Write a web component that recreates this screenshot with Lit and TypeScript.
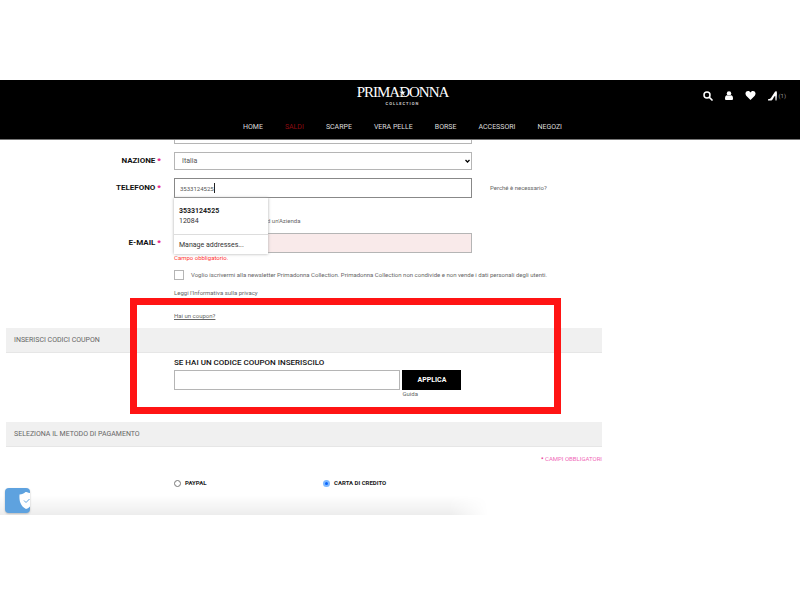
import { LitElement, html, css, svg } from "lit";
import { customElement } from "lit/decorators.js";

const NAV = ["HOME", "SALDI", "SCARPE", "VERA PELLE", "BORSE", "ACCESSORI", "NEGOZI"];

const searchIcon = svg`<svg viewBox="0 0 20 20" width="10" height="10" aria-hidden="true">
  <circle cx="8" cy="8" r="6" fill="none" stroke="#fff" stroke-width="3"/>
  <path d="M13 13l5 5" stroke="#fff" stroke-width="3.500" stroke-linecap="round"/></svg>`;
const userIcon = svg`<svg viewBox="0 0 16 18" width="8" height="9" aria-hidden="true">
  <circle cx="8" cy="5" r="4.500" fill="#fff"/>
  <path d="M0 15c0-5 2-6 4-6.500q4 3 8 0c2 .5 4 1.500 4 6.500v1q0 2-2 2H2q-2 0-2-2z" fill="#fff"/></svg>`;
const heartIcon = svg`<svg viewBox="0 0 22 19" width="11" height="9" aria-hidden="true">
  <path d="M11 19L2 10C-1 6.500 0 0 6 0c2.500 0 4 1.500 5 3 1-1.500 2.500-3 5-3 6 0 7 6.500 4 10z" fill="#fff"/></svg>`;
const shoeIcon = svg`<svg viewBox="0 0 18 20" width="9" height="10" aria-hidden="true">
  <path d="M0 16.500c4-.5 6-2 8-6L14 1.500 16.500 0c1.500 2 1.500 4 1.300 7L17 19h-2L14.500 9.500c-2 1-3 3-4.500 6-1 2.500-2.500 3.500-4.500 3.500H0z" fill="#fff"/></svg>`;
const shieldIcon = svg`<svg viewBox="0 0 22 36" width="11" height="18" aria-hidden="true">
  <path d="M22 2C17 1 15 0 13 0 10 3 6 5 1 5 0 18 3 28 14 34q4-1 8-5z" fill="#fff"/>
  <path d="M10 17l4 4 7-7" fill="none" stroke="#5ea2df" stroke-width="2"/></svg>`;

@customElement("app-root")
export class AppRoot extends LitElement {
  static styles = css`
    :host {
      display: block;
      min-height: 100vh;
      box-sizing: border-box;
      padding: 80px 0;
      background: #fff;
      color: #666;
      font: 6px/8px Roboto, "Liberation Sans", sans-serif;
    }
    * { box-sizing: border-box; }
    a { color: inherit; text-decoration: none; }
    header {
      display: grid;
      grid-template-columns: 1fr auto 1fr;
      align-items: start;
      height: 60px;
      padding-top: 4px;
      background: #000;
      border-bottom: 1px solid #777;
      color: #ddd;
    }
    .logo {
      grid-column: 2;
      display: flex;
      flex-direction: column;
      align-items: center;
      padding-left: 5px;
      color: #fff;
      font: 15px/17px "Liberation Serif", serif;
    }
    .name { display: flex; letter-spacing: -1px; }
    .star { position: relative; }
    .star svg { position: absolute; left: 0; top: 5px; }
    .sub { font: bold 4px/6px Roboto, sans-serif; letter-spacing: 1px; color: #ccc; }
    .tools {
      display: flex;
      align-items: center;
      justify-content: flex-end;
      gap: 12px;
      height: 23px;
      padding-right: 14px;
    }
    .tools a { display: flex; align-items: center; gap: 1px; }
    .tools span { color: #999; }
    nav {
      grid-column: 1 / -1;
      display: flex;
      justify-content: center;
      gap: 22px;
      padding-left: 5px;
      margin-top: 8px;
      font-size: 7px;
      line-height: 10px;
    }
    .sale { color: #8e0b10; }
    .page { position: relative; height: 375px; overflow: hidden; }
    main { width: calc(75% + 2px); padding-left: 6px; }
    .row {
      display: grid;
      grid-template-columns: minmax(0, 155fr) minmax(0, 298fr) minmax(0, 117fr);
      column-gap: 13px;
      align-items: center;
    }
    .row > label { text-align: right; color: #111; font-weight: 700; font-size: 8px; line-height: 10px; }
    .req { color: #e6007e; }
    .mid { grid-column: 2; }
    .hint { padding-left: 5px; }
    input.text, select {
      display: block;
      width: 100%;
      height: 20px;
      margin: 0;
      padding: 0 5px;
      border: 1px solid #b5b5b5;
      border-radius: 0;
      outline: 0;
      background: #fff;
      color: #555;
      font: 6px/10px Roboto, sans-serif;
    }
    .cut input.text { height: 4px; border-top: 0; }
    .country { margin-top: 8px; }
    .selectbox { display: grid; align-items: center; }
    .selectbox > * { grid-area: 1 / 1; }
    .selectbox svg { justify-self: end; margin-right: 2px; pointer-events: none; }
    select { appearance: none; height: 18px; padding: 0 7px; font-size: 7px; }
    .phone { margin-top: 8px; }
    .phone input.text { border-color: #888; }
    .anchor { position: relative; }
    .caret { position: absolute; left: 40px; top: 5px; width: 1px; height: 10px; background: #222; }
    .popup {
      position: absolute;
      z-index: 2;
      top: 20px;
      left: 0;
      width: 94px;
      background: #fff;
      color: #333;
      box-shadow: 0 0 3px #aaa;
      font-size: 7px;
      line-height: 10px;
    }
    .popup button {
      display: block;
      width: 100%;
      height: 20px;
      border: 0;
      background: none;
      color: inherit;
      font: inherit;
      text-align: left;
      padding: 0 5px;
    }
    .popup button:first-child { height: 36px; }
    .popup button:last-child { border-top: 1px solid #ddd; }
    .popup b { display: block; color: #222; }
    .company { margin-top: 19px; }
    .company span { display: block; padding-left: 93px; }
    .email { margin-top: 8px; }
    .email input.text { background: #f9eaea; }
    .error { color: #f33; line-height: 9px; }
    .news { display: flex; align-items: center; gap: 7px; margin-top: 8px; height: 10px; white-space: nowrap; }
    input.tick {
      appearance: none;
      flex: none;
      width: 10px;
      height: 10px;
      margin: 0;
      border: 1px solid #b5b5b5;
    }
    .privacy { margin-top: 9px; }
    .coupon { margin-top: 15px; text-decoration: underline; }
    .bar {
      height: 25px;
      margin: 8px 0 0;
      padding: 0 8px;
      background: #f0f0f0;
      border-bottom: 1px solid #e6e6e6;
      font-weight: 400;
      font-size: 7px;
      line-height: 24px;
    }
    .code { margin-top: 5px; }
    .code label { display: block; color: #111; font-weight: 500; font-size: 8px; line-height: 10px; }
    .apply { display: flex; gap: 2px; margin-top: 2px; }
    .apply input.text { flex: 0 0 76%; }
    .apply button {
      flex: 0 0 59px;
      height: 20px;
      padding: 0;
      border: 0;
      background: #000;
      color: #fff;
      font: bold 7px/10px Roboto, sans-serif;
    }
    .guide { margin-left: 76%; padding-left: 2px; }
    .pay { margin-top: 24px; }
    .note { margin-top: 8px; color: #f06ab8; text-align: right; }
    .methods { display: grid; grid-template-columns: 1fr 1fr; margin-top: 16px; }
    .methods label { display: flex; align-items: center; gap: 4px; color: #222; font-weight: 700; }
    .methods input {
      appearance: none;
      width: 7px;
      height: 7px;
      margin: 0;
      border: 1px solid #777;
      border-radius: 50%;
    }
    .methods input:checked { border: 2px solid #7db8ff; background: #0a66ff; }
    .frame {
      position: absolute;
      z-index: 3;
      left: 130px;
      top: 158px;
      width: 431px;
      height: 116px;
      border: 7px solid #ff1414;
      pointer-events: none;
    }
    .shade {
      position: absolute;
      left: 0;
      bottom: 0;
      width: 61%;
      height: 20px;
      background: linear-gradient(#0000, #00000012);
      mask-image: linear-gradient(90deg, #000 92%, #0000);
    }
    .consent {
      position: absolute;
      left: 5px;
      bottom: 2px;
      display: flex;
      align-items: center;
      justify-content: flex-end;
      width: 25px;
      height: 25px;
      padding: 0;
      border: 0;
      border-radius: 4px;
      background: #5ea2df;
      box-shadow: 0 1px 2px #bbb;
    }
  `;

  render() {
    const star = html`<span class="req">*</span>`;
    return html`
      <header>
        <a class="logo" href="#">
          <span class="name"><span>PRIMA</span><span class="star">D<svg viewBox="0 0 10 10" width="7" height="7" aria-hidden="true"><path d="M5 0l1 3.500h4L7 6l1.500 4L5 7.500 1.500 10 3 6 0 3.500h4z" fill="#fff" stroke="#000" stroke-width=".5"/></svg></span><span>ONNA</span></span>
          <span class="sub">COLLECTION</span>
        </a>
        <div class="tools">
          <a href="#" aria-label="Cerca">${searchIcon}</a>
          <a href="#" aria-label="Account">${userIcon}</a>
          <a href="#" aria-label="Preferiti">${heartIcon}</a>
          <a href="#">${shoeIcon}<span>(1)</span></a>
        </div>
        <nav>${NAV.map((n) => html`<a href="#" class=${n === "SALDI" ? "sale" : ""}>${n}</a>`)}</nav>
      </header>
      <div class="page">
        <main>
          <div class="row cut"><div class="mid"><input class="text" aria-label="Provincia"></div></div>
          <div class="row country">
            <label for="country">NAZIONE ${star}</label>
            <div class="selectbox">
              <select id="country"><option>Italia</option></select>
              <svg viewBox="0 0 10 8" width="5" height="4" aria-hidden="true"><path d="M1 2l4 4 4-4" fill="none" stroke="#000" stroke-width="2.500"/></svg>
            </div>
          </div>
          <div class="row phone">
            <label for="phone">TELEFONO ${star}</label>
            <div class="anchor">
              <input class="text" id="phone" type="tel" .value=${"3533124525"}>
              <span class="caret"></span>
              <div class="popup">
                <button type="button"><b>3533124525</b>12084</button>
                <button type="button">Manage addresses...</button>
              </div>
            </div>
            <a class="hint" href="#">Perché è necessario?</a>
          </div>
          <div class="row company"><div class="mid"><span>d un'Azienda</span></div></div>
          <div class="row email">
            <label for="email">E-MAIL ${star}</label>
            <input class="text" id="email" type="email">
          </div>
          <div class="row"><div class="mid error">Campo obbligatorio.</div></div>
          <div class="row"><div class="mid news">
            <input class="tick" id="news" type="checkbox">
            <label for="news">Voglio iscrivermi alla newsletter Primadonna Collection. Primadonna Collection non condivide e non vende i dati personali degli utenti.</label>
          </div></div>
          <div class="row privacy"><a class="mid" href="#">Leggi l'Informativa sulla privacy</a></div>
          <div class="row coupon"><a class="mid" href="#">Hai un coupon?</a></div>
          <h2 class="bar">INSERISCI CODICI COUPON</h2>
          <div class="row code"><div class="mid">
            <label for="code">SE HAI UN CODICE COUPON INSERISCILO</label>
            <div class="apply"><input class="text" id="code"><button type="button">APPLICA</button></div>
            <div class="guide"><a href="#">Guida</a></div>
          </div></div>
          <h2 class="bar pay">SELEZIONA IL METODO DI PAGAMENTO</h2>
          <div class="note">${star} CAMPI OBBLIGATORI</div>
          <div class="row"><div class="mid methods">
            <label><input type="radio" name="pay">PAYPAL</label>
            <label><input type="radio" name="pay" checked>CARTA DI CREDITO</label>
          </div></div>
        </main>
        <div class="frame"></div>
        <div class="shade"></div>
        <button class="consent" type="button" aria-label="Privacy">${shieldIcon}</button>
      </div>
    `;
  }
}
